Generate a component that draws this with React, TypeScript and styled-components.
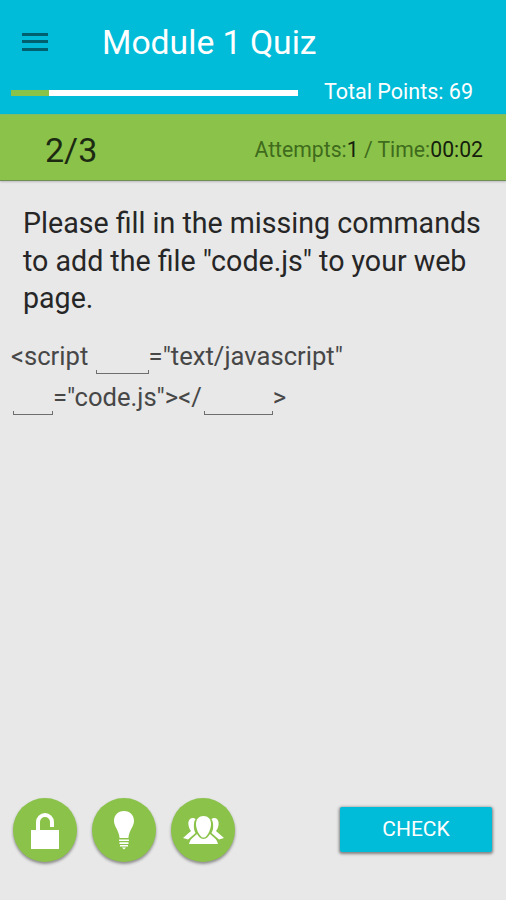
import React from "react";
import styled, { createGlobalStyle } from "styled-components";

const GlobalStyle = createGlobalStyle`
  html, body {
    margin: 0;
    padding: 0;
    background: #e8e8e8;
  }
  * {
    box-sizing: border-box;
  }
`;

const Screen = styled.div`
  width: 506px;
  height: 900px;
  display: flex;
  flex-direction: column;
  overflow: hidden;
  background: #e8e8e8;
  font-family: Roboto, "Liberation Sans", sans-serif;
`;

const Header = styled.header`
  height: 114px;
  flex: none;
  background: #00bcd9;
  display: flex;
  flex-direction: column;
`;

const TitleRow = styled.div`
  height: 80px;
  padding: 3px 0 0 22px;
  display: flex;
  align-items: center;
`;

const MenuIcon = styled.div`
  width: 26px;
  height: 18px;
  display: flex;
  flex-direction: column;
  justify-content: space-between;
  span {
    display: block;
    height: 3px;
    background: #00606f;
  }
`;

const Title = styled.h1`
  margin: 2px 0 0 54px;
  font-size: 33.7px;
  font-weight: 400;
  color: #fff;
`;

const PointsRow = styled.div`
  padding: 0 33px 0 11px;
  display: flex;
  align-items: center;
  justify-content: space-between;
`;

const Progress = styled.div`
  width: 287px;
  height: 6px;
  margin-top: 1px;
  background: #fff;
`;

const ProgressFill = styled.div`
  height: 100%;
  background: #8bc34a;
`;

const Points = styled.div`
  font-size: 21.5px;
  margin-top: -1px;
  color: #fff;
`;

const StatusBar = styled.div`
  height: 67px;
  flex: none;
  background: #8bc34a;
  border-top: 1px solid #7fbd6a;
  border-bottom: 1px solid #6f8f58;
  box-shadow: 0 1px 2px rgba(0, 0, 0, 0.2);
  padding: 4px 23px 0 45px;
  display: flex;
  align-items: center;
  justify-content: space-between;
`;

const Counter = styled.div`
  font-size: 34px;
  color: #1c2a12;
`;

const Stats = styled.div`
  font-size: 21.2px;
  color: #3f6b1c;
`;

const StatValue = styled.span`
  color: #14200c;
`;

const Question = styled.p`
  margin: 0;
  padding: 24px 10px 0 23px;
  font-size: 28.6px;
  line-height: 37.5px;
  color: #262626;
`;

const Code = styled.div`
  padding: 18px 0 0 11px;
  font-size: 25.6px;
  line-height: 41px;
  color: #474747;
`;

const Blank = styled.span<{ $width: number; $left?: number }>`
  display: inline-block;
  width: ${(p) => p.$width}px;
  height: 4px;
  margin-left: ${(p) => p.$left ?? 0}px;
  margin-bottom: -9px;
  border: 1px solid #6e6e6e;
  border-top: 0;
`;

const Footer = styled.div`
  margin-top: auto;
  padding: 0 14px 38px 13px;
  display: flex;
  align-items: center;
`;

const RoundButtons = styled.div`
  display: flex;
  gap: 15px;
`;

const RoundButton = styled.button`
  width: 64px;
  height: 64px;
  padding: 0;
  border: 0;
  border-radius: 50%;
  background: #8bc34a;
  box-shadow: 0 2px 3px rgba(0, 0, 0, 0.4);
  display: flex;
  align-items: center;
  justify-content: center;
`;

const CheckButton = styled.button`
  width: 152px;
  height: 45px;
  margin: 0 0 2px auto;
  border: 0;
  border-radius: 2px;
  background: #00bcd9;
  box-shadow: 0 1px 3px 1px rgba(0, 0, 0, 0.45);
  color: #fff;
  font-family: inherit;
  font-size: 21px;
`;

const LockIcon = () => (
  <svg width="40" height="44" viewBox="0 0 40 44" fill="none">
    <path d="M6 22h28v19H6z" fill="#fff" />
    <path d="M13 22v-8a7 7 0 0 1 14 0v5" stroke="#fff" strokeWidth="4" />
  </svg>
);

const BulbIcon = () => (
  <svg width="24" height="40" viewBox="0 0 24 40" fill="#fff">
    <path d="M12 1C5.600 1 2 5.600 2 10.800c0 6 4.800 9.200 5.600 17.200h8.800C17.200 20 22 16.800 22 10.800 22 5.600 18.400 1 12 1z" />
    <path d="M7 29.500h10v1.600H7zM7.500 32.300h9v1.600h-9zM8 35h8v1.600H8zM10 37.600h4L12 39.500z" />
  </svg>
);

const sidePerson =
  "M9.500 2C6 2.500 5 5.500 5.500 9c.3 2.500 1.300 4.500 2.500 6L0 22l5 1.500L12.500 17c-1.500-2.500-2-6-1.500-9.500.2-2 .8-3.500 1.700-4.500C11.500 2.500 10.500 1.800 9.500 2z";

const GroupIcon = () => (
  <svg width="41" height="28" viewBox="0 0 41 28" fill="#fff">
    <path d={sidePerson} />
    <path d={sidePerson} transform="translate(41 0) scale(-1 1)" />
    <path d="M20.500 0c-4.500 0-7.500 3-7.500 8 0 5 3 11 5.500 13 1.300.8 2.700.8 4 0 2.500-2 5.500-8 5.500-13 0-5-3-8-7.500-8z" />
    <path d="M14 18c1.500 2.500 3.500 5 6.500 5s5-2.500 6.500-5l4.500 4c2 1.500 3 4 3.500 6H6c.5-2 1.500-4.500 3.500-6z" />
  </svg>
);

export default function App() {
  return (
    <Screen>
      <GlobalStyle />
      <Header>
        <TitleRow>
          <MenuIcon>
            <span />
            <span />
            <span />
          </MenuIcon>
          <Title>Module 1 Quiz</Title>
        </TitleRow>
        <PointsRow>
          <Progress>
            <ProgressFill style={{ width: `${(38 / 287) * 100}%` }} />
          </Progress>
          <Points>Total Points: 69</Points>
        </PointsRow>
      </Header>

      <StatusBar>
        <Counter>2/3</Counter>
        <Stats>
          Attempts:<StatValue>1</StatValue> / Time:<StatValue>00:02</StatValue>
        </Stats>
      </StatusBar>

      <Question>
        Please fill in the missing commands to add the file "code.js" to your
        web page.
      </Question>

      <Code>
        <div>
          &lt;script <Blank $width={53} $left={1} />
          ="text/javascript"
        </div>
        <div>
          <Blank $width={40} $left={2} />
          ="code.js"&gt;&lt;/
          <Blank $width={69} $left={2} />
          &gt;
        </div>
      </Code>

      <Footer>
        <RoundButtons>
          <RoundButton>
            <LockIcon />
          </RoundButton>
          <RoundButton>
            <BulbIcon />
          </RoundButton>
          <RoundButton>
            <GroupIcon />
          </RoundButton>
        </RoundButtons>
        <CheckButton>CHECK</CheckButton>
      </Footer>
    </Screen>
  );
}
